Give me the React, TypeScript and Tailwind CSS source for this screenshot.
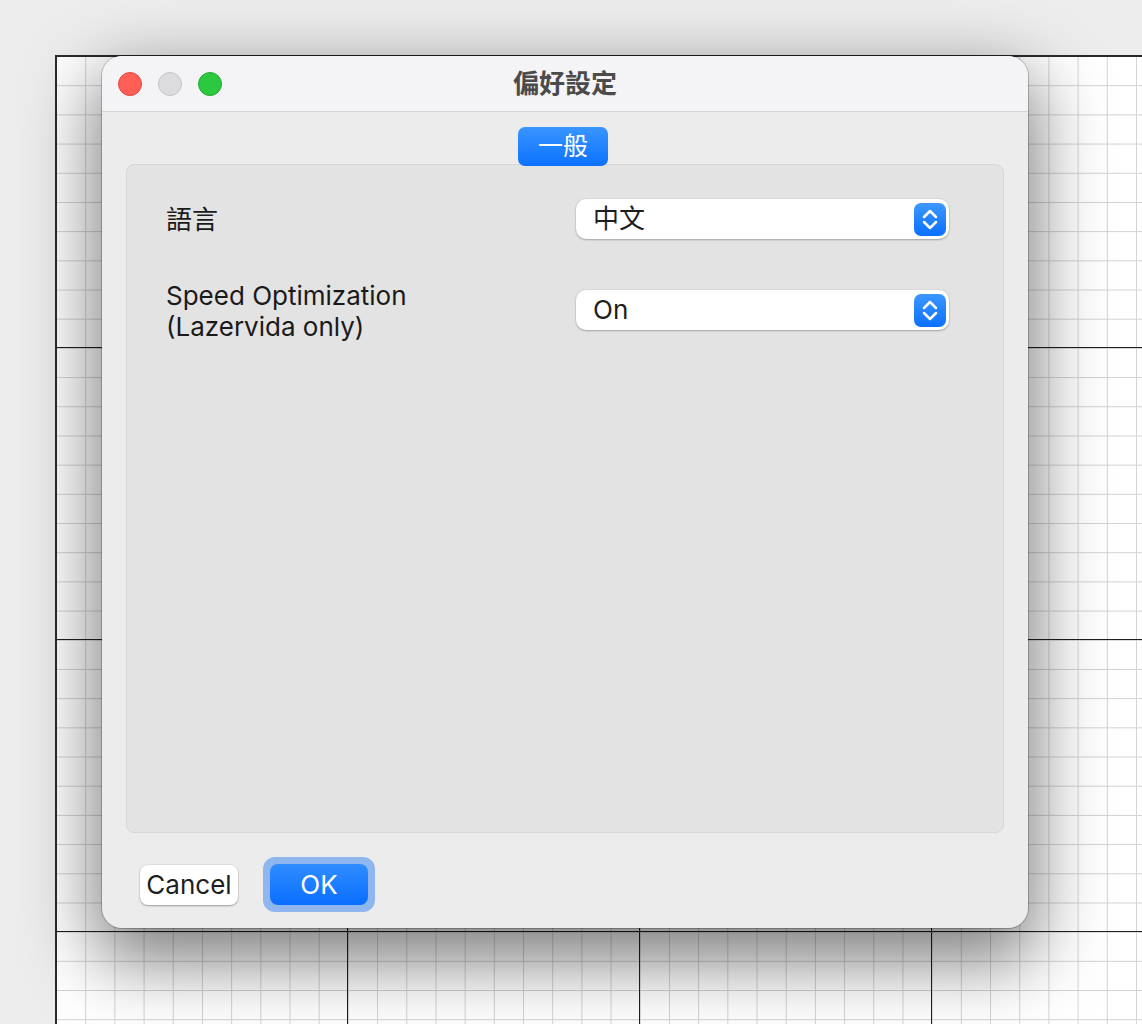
import React from 'react';

const FONT = "font-['Inter','Noto_Sans_CJK_TC',sans-serif]";

const Stepper: React.FC = () => (
  <div className="w-[32px] h-[33px] rounded-[7px] bg-[linear-gradient(to_bottom,#3d97ff,#0a70ff)]">
    <svg width="32" height="33" viewBox="0 0 32 33" fill="none" stroke="white" strokeWidth="2.5" strokeLinecap="round" strokeLinejoin="round">
      <path d="M10 14 L16 8 L22 14" />
      <path d="M10 19 L16 25 L22 19" />
    </svg>
  </div>
);

const Select: React.FC<{ value: string }> = ({ value }) => (
  <div className="w-[373px] h-[40px] rounded-[10px] bg-white shadow-[0_1px_2px_rgba(0,0,0,0.25),0_0_0_1px_rgba(0,0,0,0.04)] flex items-center justify-between pl-[17px] pr-[3px]">
    <span className="text-[26px] text-[#1e1e1e] leading-none">{value}</span>
    <Stepper />
  </div>
);

export default function App() {
  return (
    <div className={`relative w-[1142px] h-[1024px] overflow-hidden bg-[#ededed] ${FONT}`}>
      {/* drawing canvas */}
      <div className="pl-[55px] pt-[55px] h-full">
        <div className="h-full border-t-2 border-l-2 border-[#2a2a2a] bg-white bg-[image:linear-gradient(to_right,transparent_290px,#1f1f1f_290px,#1f1f1f_291px,transparent_291px),linear-gradient(to_bottom,transparent_290px,#1f1f1f_290px,#1f1f1f_291px,transparent_291px),linear-gradient(to_right,transparent_28.2px,#d2d2d2_28.2px),linear-gradient(to_bottom,transparent_28.2px,#d2d2d2_28.2px)] [background-size:292px_292px,292px_292px,29.2px_29.2px,29.2px_29.2px]" />
      </div>

      {/* preferences window */}
      <div className="absolute left-[102px] top-[56px] w-[926px] h-[872px] rounded-[20px] bg-[#ececec] flex flex-col overflow-hidden shadow-[0_26px_70px_8px_rgba(0,0,0,0.5),0_0_0_1px_rgba(0,0,0,0.22)]">
        <div className="relative h-[56px] shrink-0 bg-[#f4f4f6] border-b border-[#d4d4d4] flex items-center justify-center">
          <div className="absolute left-[16px] top-[16px] flex gap-[16px]">
            <span className="w-[24px] h-[24px] rounded-full bg-[#ff5f57] border border-[#e4463e]" />
            <span className="w-[24px] h-[24px] rounded-full bg-[#dcdcde] border border-[#c4c4c6]" />
            <span className="w-[24px] h-[24px] rounded-full bg-[#2bc840] border border-[#20aa32]" />
          </div>
          <span className="text-[26px] font-bold text-[#4b4b4b] leading-none">偏好設定</span>
        </div>

        <div className="flex-1 flex flex-col px-[24px] pt-[15px]">
          <div className="flex justify-center pr-[4px] relative z-10">
            <div className="w-[90px] h-[39px] rounded-[7px] bg-[linear-gradient(to_bottom,#3a95ff,#0b72ff)] flex items-center justify-center text-white text-[25px] leading-none">
              一般
            </div>
          </div>
          <div className="-mt-[2px] h-[669px] rounded-[8px] bg-[#e3e3e3] border border-[#d7d7d7] pl-[39px] pt-[34px] flex flex-col gap-[39px]">
            <div className="flex items-center">
              <div className="w-[410px] text-[26px] text-[#1a1a1a] leading-[31px]">語言</div>
              <Select value="中文" />
            </div>
            <div className="flex items-center">
              <div className="w-[410px] text-[26px] text-[#1a1a1a] leading-[31px] pt-[2px]">
                Speed Optimization
                <br />
                (Lazervida only)
              </div>
              <Select value="On" />
            </div>
          </div>

          <div className="flex items-center gap-[25px] pl-[14px] mt-[24px]">
            <button className="w-[98px] h-[40px] rounded-[8px] bg-white shadow-[0_1px_2px_rgba(0,0,0,0.3),0_0_0_1px_rgba(0,0,0,0.04)] text-[26px] text-[#1e1e1e] leading-none">
              Cancel
            </button>
            <div className="p-[7px] rounded-[12px] bg-[#8fb6ef]">
              <button className="w-[98px] h-[41px] rounded-[8px] bg-[linear-gradient(to_bottom,#2f8dff,#0a6eff)] text-white text-[26px] leading-none">
                OK
              </button>
            </div>
          </div>
        </div>
      </div>
    </div>
  );
}
